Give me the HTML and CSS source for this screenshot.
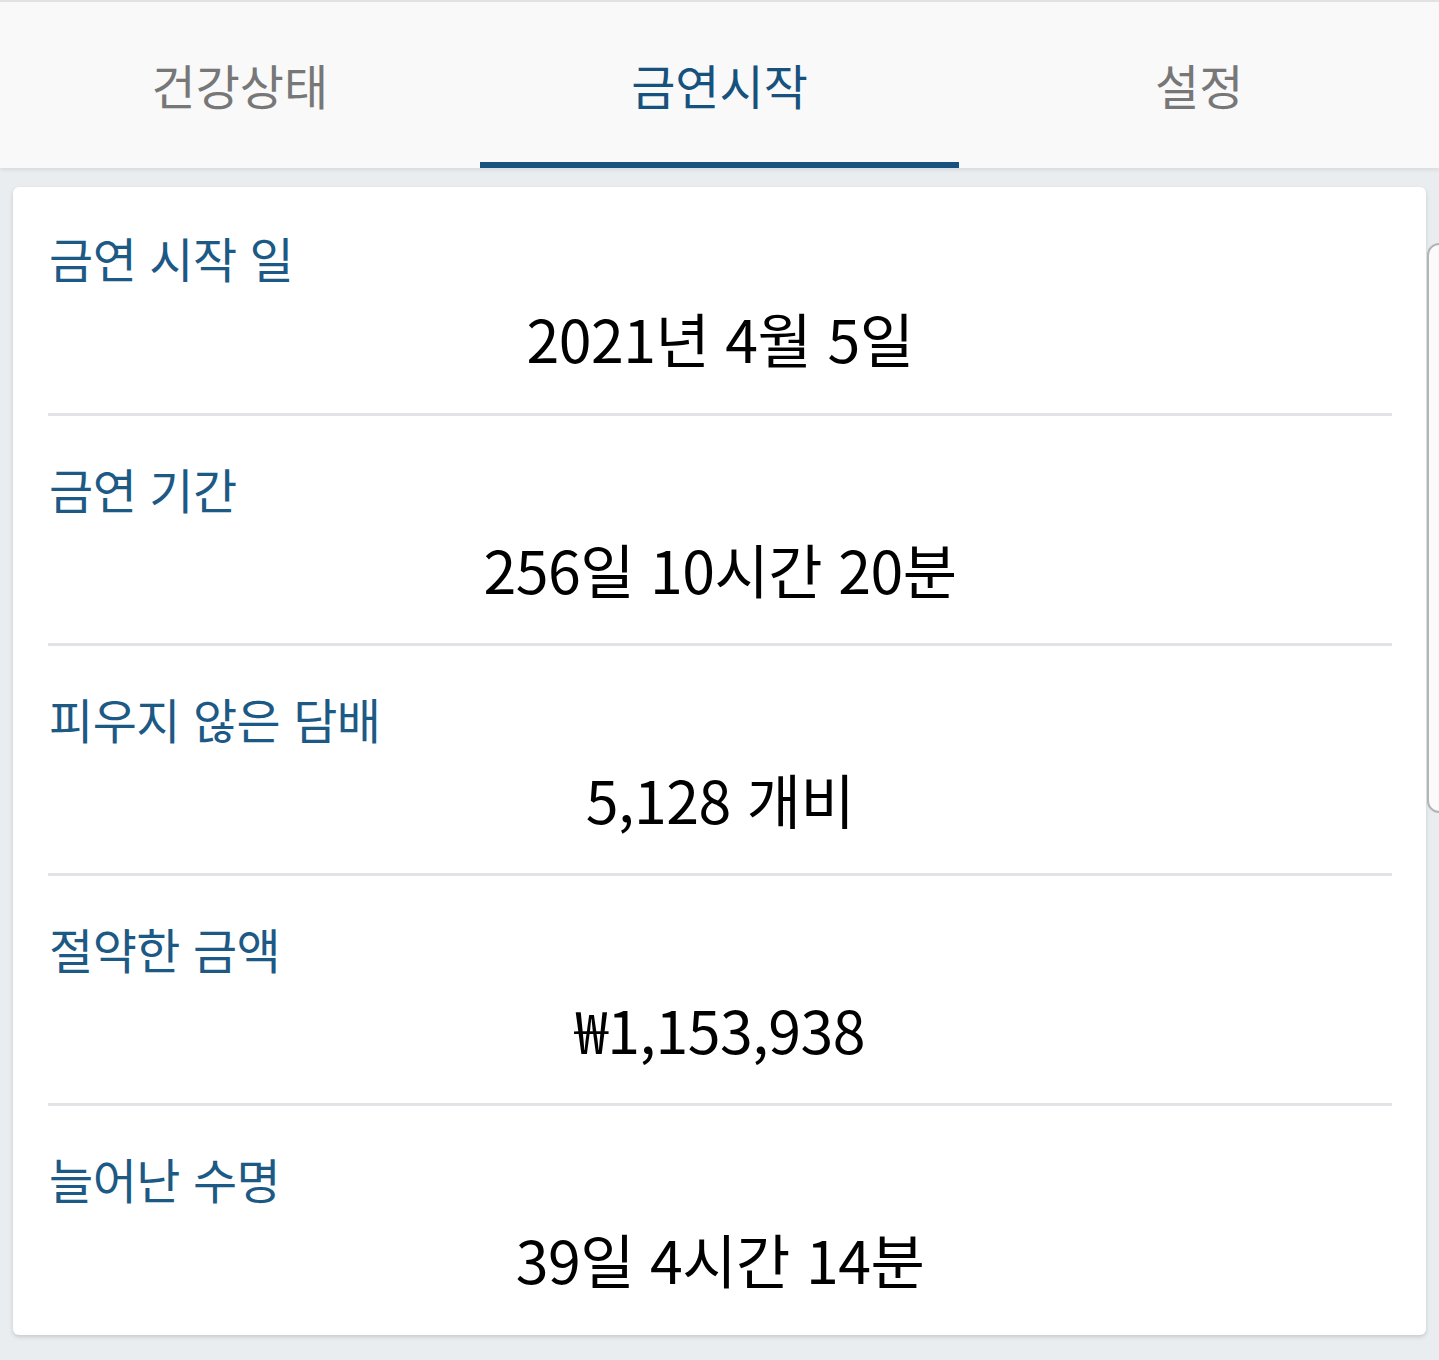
FILE: index.html
```html
<!DOCTYPE html>
<html lang="ko">
<head>
  <meta charset="UTF-8">
  <meta name="viewport" content="width=device-width, initial-scale=1.0">
  <title>금연시작</title>
  <link rel="stylesheet" href="styles.css">
</head>
<body>
  <div class="tab-bar">
    <div class="tab">건강상태</div>
    <div class="tab active">금연시작</div>
    <div class="tab">설정</div>
  </div>

  <div class="content">
    <div class="card">
      <div class="stat-row">
        <div class="stat-label">금연 시작 일</div>
        <div class="stat-value">2021년 4월 5일</div>
      </div>
      <div class="stat-row">
        <div class="stat-label">금연 기간</div>
        <div class="stat-value">256일 10시간 20분</div>
      </div>
      <div class="stat-row">
        <div class="stat-label">피우지 않은 담배</div>
        <div class="stat-value">5,128 개비</div>
      </div>
      <div class="stat-row">
        <div class="stat-label">절약한 금액</div>
        <div class="stat-value">₩1,153,938</div>
      </div>
      <div class="stat-row last">
        <div class="stat-label">늘어난 수명</div>
        <div class="stat-value">39일 4시간 14분</div>
      </div>
    </div>
    <div class="side-handle"></div>
  </div>
</body>
</html>
```

FILE: styles.css
```css
body {
  margin: 0;
  font-family: "Noto Sans CJK KR", "Noto Sans", sans-serif;
  background-color: #e9edf0;
  width: 1439px;
  height: 1360px;
  overflow: hidden;
}
.tab-bar {
  display: grid;
  grid-template-columns: repeat(3, 1fr);
  height: 166px;
  background-color: #f9f9f9;
  border-top: 2px solid #e2e2e2;
  box-shadow: 0 2px 4px rgba(0,0,0,0.08);
  position: relative;
  z-index: 1;
}
.tab {
  display: flex;
  align-items: center;
  justify-content: center;
  font-size: 48px;
  color: #777;
  padding-top: 4px;
  border-bottom: 6px solid transparent;
}
.tab.active {
  color: #17527e;
  border-bottom-color: #17527e;
}
.content {
  position: relative;
  padding: 19px 13px 0 13px;
}
.card {
  background-color: white;
  border-radius: 6px;
  box-shadow: 0 2px 4px rgba(0,0,0,0.15);
  height: 1148px;
  padding: 0 34px 0 35px;
  box-sizing: border-box;
}
.stat-row {
  height: 230px;
  box-sizing: border-box;
  padding-top: 42px;
  border-bottom: 3px solid #e1e3e6;
}
.stat-row:first-child {
  height: 229px;
  padding-top: 40px;
}
.stat-row.last {
  border-bottom: none;
}
.stat-label {
  font-size: 48px;
  letter-spacing: -0.5px;
  line-height: 60px;
  color: #1d5985;
  padding-left: 1px;
}
.stat-value {
  font-size: 59px;
  letter-spacing: -0.5px;
  line-height: 80px;
  margin-top: 11px;
  color: #000;
  text-align: center;
}
.side-handle {
  position: absolute;
  left: 1427px;
  top: 75px;
  width: 40px;
  height: 566px;
  border: 2px solid #b4b4b4;
  border-radius: 12px;
  background-color: #fafafa;
}
```
